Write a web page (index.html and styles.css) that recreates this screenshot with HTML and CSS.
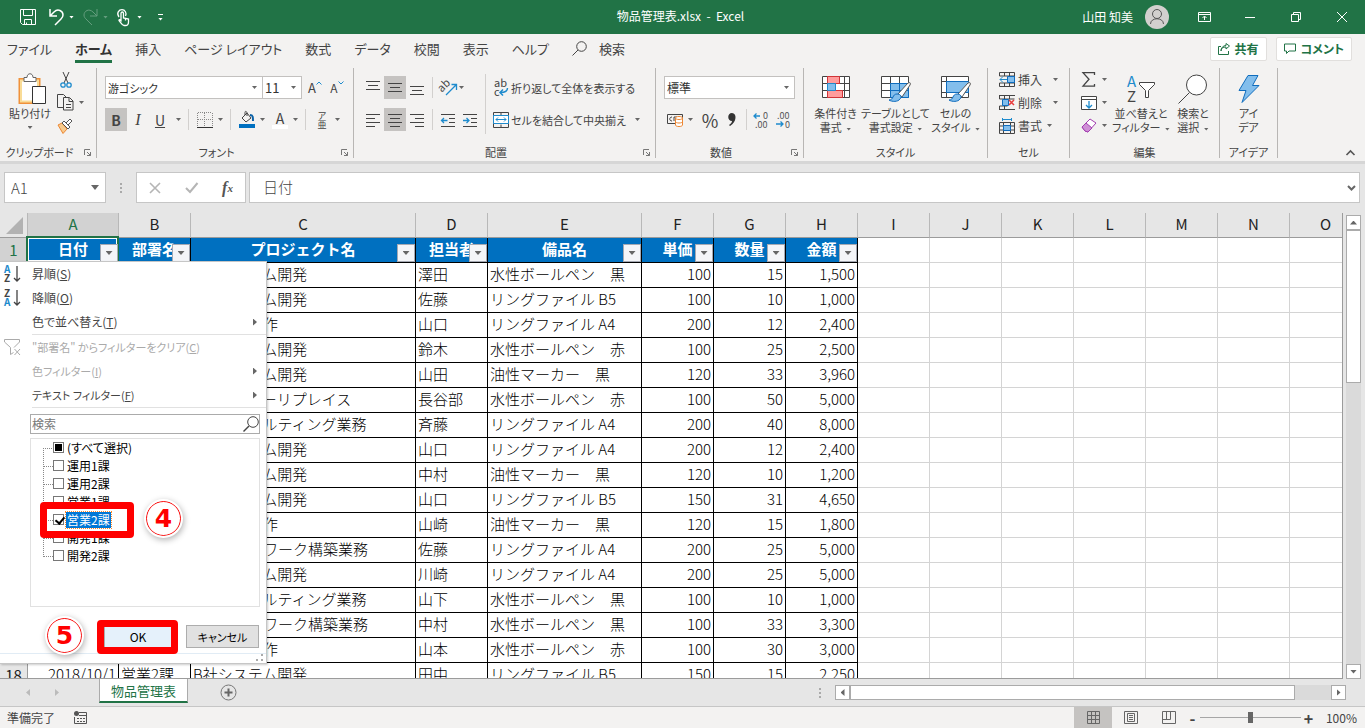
FILE: index.html
```html
<!DOCTYPE html>
<html lang="ja">

<head>
  <title>物品管理表.xlsx - Excel</title>
  <meta charset="utf-8">
  <meta name="viewport" content="width=device-width, initial-scale=1">
  <link rel="stylesheet" href="styles.css">
</head>

<body>

  <!-- Title bar -->
  <header class="titlebar">
    <div class="quick">
      <button aria-label="保存"><svg width="16" height="16" viewBox="0 0 16 16"><path d="M.5.5h15v15h-13l-2-2zM3.5.5v6h9v-6M4.5 15.500v-5h7v5M6.500 15.500v-2"/></svg></button>
      <button class="wide" aria-label="元に戻す"><svg width="15" height="18" viewBox="0 0 15 18"><path d="M1 1v7h7M1 8l4-4c4-4 9-1 9 3 0 2-1 3-2 4l-6 6" stroke-width="1.500"/></svg><i class="caret"></i></button>
      <button class="wide faded" aria-label="やり直し"><svg width="15" height="18" viewBox="0 0 15 18"><path d="M14 1v7H7M14 8l-4-4C6 0 1 3 1 7c0 2 1 3 2 4l6 6"/></svg><i class="caret"></i></button>
      <button class="wide touch" aria-label="タッチ"><svg width="13" height="17" viewBox="0 0 13 17"><path d="M2 8C-1 4 2 .7 5 .7S10 4 8.500 7M4 11V4.500c0-2 2.500-2 2.500 0V9l5 1v3c0 2-1 3.500-3 3.500H7c-2 0-3-3-5-5 0-1 1-1 2 0zM8.500 9.500v2" stroke-width="1.300"/></svg><i class="caret"></i></button>
      <button aria-label="カスタマイズ"><span class="more"></span></button>
    </div>
    <h1>物品管理表.xlsx&nbsp; -&nbsp; Excel</h1>
    <div class="account">
      <span>山田 知美</span>
      <svg class="avatar" width="24" height="24" viewBox="0 0 24 24"><circle cx="12" cy="12" r="12" fill="#d2d0ce" stroke="none"/><circle cx="12" cy="9" r="4.500"/><path d="M5.500 19c0-7 13-7 13 0"/></svg>
    </div>
    <div class="window-buttons">
      <button aria-label="リボンの表示"><svg width="13" height="10" viewBox="0 0 13 10"><path d="M.5.5h12v9H.5zM.5 2.500h12M6.500 8V4.500M4.500 6l2-2 2 2"/></svg></button>
      <button aria-label="最小化"><svg width="10" height="10" viewBox="0 0 10 10"><path d="M0 5.500h10"/></svg></button>
      <button aria-label="元のサイズ"><svg width="10" height="10" viewBox="0 0 10 10"><path d="M.5 2.500h7v7h-7zM2.500 2.500v-2h7v7h-2"/></svg></button>
      <button aria-label="閉じる"><svg width="10" height="10" viewBox="0 0 10 10"><path d="M0 0l10 10M10 0L0 10"/></svg></button>
    </div>
  </header>

  <!-- Ribbon tabs -->
  <nav class="tabs">
    <a href="#">ファイル</a>
    <a href="#" class="active">ホーム</a>
    <a href="#">挿入</a>
    <a href="#">ページ レイアウト</a>
    <a href="#">数式</a>
    <a href="#">データ</a>
    <a href="#">校閲</a>
    <a href="#">表示</a>
    <a href="#">ヘルプ</a>
    <a href="#" class="find"><svg width="15" height="15" viewBox="0 0 15 15"><circle cx="9.500" cy="5.500" r="4.800"/><path d="M6 9l-5.500 5.500"/></svg>検索</a>
    <div class="tab-actions">
      <button><svg width="12" height="12" viewBox="0 0 12 12"><path d="M3 3.500H.5v8h10V8M3 8c0-3 2-4 5-4V6l3.500-3L8 .5V2.500C5 2.500 3 5 3 8z"/></svg>共有</button>
      <button><svg width="12" height="12" viewBox="0 0 12 12"><path d="M.5 1h11v7H5L2.500 10.500V8h-2z"/></svg>コメント</button>
    </div>
  </nav>

  <!-- Ribbon -->
  <div class="ribbon">
    <section class="group clipboard">
      <div class="group-body">
        <button class="big"><svg width="28" height="32" viewBox="0 0 28 32"><path d="M1.500 6h20v24h-20z" fill="#fff" stroke="#f0913a" stroke-width="2"/><path d="M3 7.500h17v21H3z" stroke="#f9dc97" stroke-width="2"/><path d="M6 4.500h3c0-5 6-5 6 0h3v4H6z" fill="#fff" stroke="#666"/><path d="M14.500 13.500h13v17h-13z" fill="#fff" stroke="#333"/></svg><span>貼り付け</span><i class="caret"></i></button>
        <div class="stack">
          <button aria-label="切り取り"><svg width="12" height="16" viewBox="0 0 12 16"><path d="M3 0l5 11M9 0L4 11" stroke="#444"/><circle cx="3" cy="13" r="2.200" stroke="#1e8bcd" stroke-width="1.300"/><circle cx="9" cy="13" r="2.200" stroke="#1e8bcd" stroke-width="1.300"/></svg></button>
          <button aria-label="コピー"><svg width="17" height="17" viewBox="0 0 17 17"><path d="M6 13.500H.5V.5h6l3 3M6.500 3.500h6l3.500 3.500v9H6.500zM12 4v3.500h4M9 10.500h5M9 13.500h5"/></svg><i class="caret"></i></button>
          <button aria-label="書式のコピー"><svg width="16" height="16" viewBox="0 0 16 16"><path d="M1 7l4-2 5 6-4 4.500z" fill="#f8cb8d" stroke="#ed8733"/><path d="M5 5l2-2 6 6-2 2zM9 5l4-4 2 2-4 4" fill="#fff" stroke="#555"/></svg></button>
        </div>
      </div>
      <div class="group-title"><span>クリップボード</span><button class="launcher" aria-label="詳細"><svg width="7" height="7" viewBox="0 0 7 7"><path d="M.5 6V.5H6M3 3l3.500 3.500M6.500 3v3.500H3"/></svg></button></div>
    </section>

    <section class="group font">
      <div class="group-body rows">
        <div class="row">
          <div class="combo name"><input type="text" value="游ゴシック" aria-label="フォント"><i class="caret"></i></div><div class="combo size"><input type="text" value="11" aria-label="サイズ"><i class="caret"></i></div>
          <button class="grow" aria-label="拡大">A<svg width="6" height="4" viewBox="0 0 6 4"><path d="M.5 3.500L3 1l2.500 2.500" stroke="#1e8bcd"/></svg></button>
          <button class="grow small" aria-label="縮小">A<svg width="6" height="4" viewBox="0 0 6 4"><path d="M.5.5L3 3 5.500.5" stroke="#1e8bcd"/></svg></button>
        </div>
        <div class="row">
          <button class="tool on"><b>B</b></button>
          <button class="tool serif"><em>I</em></button>
          <button class="tool"><u>U</u></button><i class="caret"></i>
          <span class="rule"></span>
          <button class="tool slim" aria-label="罫線"><svg width="16" height="16" viewBox="0 0 16 16"><path d="M.5 1v13M7.500 1v13M15.500 1v13M1 .5h14M1 7.500h14" stroke="#888" stroke-dasharray="1 1"/><path d="M0 15.500h16" stroke="#333"/></svg></button><i class="caret"></i>
          <span class="rule"></span>
          <button class="tool slim" aria-label="塗りつぶしの色"><svg width="16" height="17" viewBox="0 0 16 17"><path d="M3 7l5-5 4 5-5 4zM6 4V1.500c0-2 2-1 2 .5v3" stroke="#444"/><path d="M11 4c3 0 3 2 3 6" stroke="#0b62a8" stroke-width="2"/><path d="M0 13h16v4H0z" fill="#0070c0" stroke="none"/></svg></button><i class="caret"></i>
          <button class="tool slim font-color"><span>A</span></button><i class="caret"></i>
          <span class="rule"></span>
          <button class="tool slim ruby"><span>ア</span><span>亜</span></button><i class="caret"></i>
        </div>
      </div>
      <div class="group-title"><span>フォント</span><button class="launcher" aria-label="詳細"><svg width="7" height="7" viewBox="0 0 7 7"><path d="M.5 6V.5H6M3 3l3.500 3.500M6.500 3v3.500H3"/></svg></button></div>
    </section>

    <section class="group align">
      <div class="group-body">
        <div class="rows">
          <div class="row">
            <button class="tool" aria-label="上揃え"><svg width="14" height="16" viewBox="0 0 14 16"><path d="M0 1.500h14M2 5.500h10M0 9.500h14"/></svg></button>
            <button class="tool on" aria-label="上下中央揃え"><svg width="14" height="16" viewBox="0 0 14 16"><path d="M0 3.500h14M2 7.500h10M0 11.500h14"/></svg></button>
            <button class="tool" aria-label="下揃え"><svg width="14" height="16" viewBox="0 0 14 16"><path d="M0 6.500h14M2 10.500h10M0 14.500h14"/></svg></button>
            <span class="rule"></span>
            <button class="tool" aria-label="方向"><svg width="17" height="17" viewBox="0 0 17 17"><text x="-1" y="9" transform="rotate(-45 6 8)" font-size="11" fill="#444" stroke="none">ab</text><path d="M6 16L16 6M11.500 5.500h5V11" stroke="#1e8bcd" stroke-width="1.300"/></svg></button><i class="caret"></i>
          </div>
          <div class="row">
            <button class="tool" aria-label="左揃え"><svg width="14" height="14" viewBox="0 0 14 14"><path d="M0 1.500h14M0 5.500h9M0 9.500h14M0 13.500h9"/></svg></button>
            <button class="tool on" aria-label="中央揃え"><svg width="14" height="14" viewBox="0 0 14 14"><path d="M0 1.500h14M2 5.500h10M0 9.500h14M2 13.500h10"/></svg></button>
            <button class="tool" aria-label="右揃え"><svg width="14" height="14" viewBox="0 0 14 14"><path d="M0 1.500h14M5 5.500h9M0 9.500h14M5 13.500h9"/></svg></button>
            <span class="rule"></span>
            <button class="tool" aria-label="インデントを減らす"><svg width="14" height="14" viewBox="0 0 14 14"><path d="M0 1.500h14M8 5.500h6M8 9.500h6M0 13.500h14"/><path d="M6.500 7.500h-6M3 5L.5 7.500 3 10" stroke="#1e8bcd" stroke-width="1.300"/></svg></button>
            <button class="tool" aria-label="インデントを増やす"><svg width="14" height="14" viewBox="0 0 14 14"><path d="M0 1.500h14M8 5.500h6M8 9.500h6M0 13.500h14"/><path d="M0 7.500h6M3.500 5L6 7.500 3.500 10" stroke="#1e8bcd" stroke-width="1.300"/></svg></button>
          </div>
        </div>
        <span class="rule tall"></span>
        <div class="rows text-rows">
          <button class="label"><svg width="16" height="18" viewBox="0 0 16 18"><text x="1" y="8" font-size="11" fill="#444" stroke="none">ab</text><text x="1" y="17" font-size="11" fill="#444" stroke="none">c</text><path d="M14.500 9c0 4-3 4.500-7 4.500M10 10.500l-3 3 3 3" stroke="#1e8bcd" stroke-width="1.500"/></svg><span>折り返して全体を表示する</span></button>
          <button class="label"><svg width="16" height="16" viewBox="0 0 16 16"><path d="M.5.5h15v15H.5zM8 .5v3M8 12.500v3"/><path d="M.5 3.500h15v8H.5z" fill="#fff" stroke="#1e8bcd"/><path d="M3 7.500h10M5 5.500l-2 2 2 2M11 5.500l2 2-2 2" stroke="#1e8bcd"/></svg><span>セルを結合して中央揃え</span><i class="caret"></i></button>
        </div>
      </div>
      <div class="group-title"><span>配置</span><button class="launcher" aria-label="詳細"><svg width="7" height="7" viewBox="0 0 7 7"><path d="M.5 6V.5H6M3 3l3.500 3.500M6.500 3v3.500H3"/></svg></button></div>
    </section>

    <section class="group number">
      <div class="group-body rows">
        <div class="row"><div class="combo format"><select aria-label="表示形式"><option>標準</option></select><i class="caret"></i></div></div>
        <div class="row">
          <button class="tool" aria-label="通貨"><svg width="17" height="14" viewBox="0 0 17 14"><path d="M.5 1.500h15v9H.5z"/><path d="M5 4c-3 0-3 4 0 4M7 8V4h3v4" stroke="#444"/><path d="M8.500 5v7c0 2 7 2 7 0V5c0-2-7-2-7 0z" fill="#fff" stroke="#ed8733"/><path d="M8.500 5c0 2 7 2 7 0M8.500 8.500c0 2 7 2 7 0" stroke="#ed8733"/></svg></button><i class="caret"></i>
          <button class="tool percent">%</button>
          <button class="tool" aria-label="桁区切り"><svg width="8" height="14" viewBox="0 0 8 14"><path d="M4 0c5 0 5 9-2 13l-1-1c2-1 3-3 3-4C-1 8-1 0 4 0z" fill="#333" stroke="none"/></svg></button>
          <span class="rule"></span>
          <button class="tool" aria-label="小数点以下の表示桁数を増やす"><svg width="16" height="16" viewBox="0 0 16 16"><path d="M7 4H1M3.500 1.500L1 4l2.500 2.500" stroke="#1e8bcd" stroke-width="1.300"/><text x="10" y="7" font-size="9" fill="#555" stroke="none">0</text><text x="2" y="16" font-size="9" fill="#555" stroke="none">.00</text></svg></button>
          <button class="tool" aria-label="小数点以下の表示桁数を減らす"><svg width="16" height="16" viewBox="0 0 16 16"><path d="M1 12h7M5.500 9.500L8 12l-2.500 2.500" stroke="#1e8bcd" stroke-width="1.300"/><text x="2" y="7" font-size="9" fill="#555" stroke="none">.00</text><text x="10" y="16" font-size="9" fill="#555" stroke="none">0</text></svg></button>
        </div>
      </div>
      <div class="group-title"><span>数値</span><button class="launcher" aria-label="詳細"><svg width="7" height="7" viewBox="0 0 7 7"><path d="M.5 6V.5H6M3 3l3.500 3.500M6.500 3v3.500H3"/></svg></button></div>
    </section>

    <section class="group styles">
      <div class="group-body">
        <button class="big"><svg width="30" height="28" viewBox="0 0 30 28"><path d="M1.500 1.500h27v21h-27zM1.500 8.500h27M1.500 15.500h27M6.500 1.500v21M23.500 1.500v21" fill="#fff"/><path d="M6.500 1.500h12v7h-12zM6.500 15.500h15v7h-15z" fill="#ff9c9c" stroke="#d13438"/><path d="M6.500 8.500h8v7h-8z" fill="#83beec" stroke="#1e8bcd"/></svg><span>条件付き</span><span>書式 <i class="caret"></i></span></button>
        <button class="big"><svg width="32" height="28" viewBox="0 0 32 28"><path d="M1.500 1.500h27v21h-27zM1.500 8.500h27M1.500 15.500h27M10.500 1.500v21M19.500 1.500v21" fill="#fff"/><path d="M10.500 8.500h18v14h-18zM10.500 15.500h18M19.500 8.500v14" fill="#83beec" stroke="#0f6cbd"/><path d="M18 19L28 8c2-1 3 0 2 2L22 22z" fill="#fff" stroke="#555"/><path d="M9 25c5 0 3-6 8-6 4 0 5 3 3 5-2 3-8 3-11 1z" fill="#83beec" stroke="#0f6cbd"/></svg><span>テーブルとして</span><span>書式設定 <i class="caret"></i></span></button>
        <button class="big"><svg width="32" height="28" viewBox="0 0 32 28"><path d="M1.500 1.500h27v21h-27zM1.500 6.500h27M1.500 17.500h27M6.500 1.500v21" fill="#fff"/><path d="M6.500 6.500h22v11h-22z" fill="#83beec" stroke="#0f6cbd"/><path d="M18 19L28 8c2-1 3 0 2 2L22 22z" fill="#fff" stroke="#555"/><path d="M9 25c5 0 3-6 8-6 4 0 5 3 3 5-2 3-8 3-11 1z" fill="#83beec" stroke="#0f6cbd"/></svg><span>セルの</span><span>スタイル <i class="caret"></i></span></button>
      </div>
      <div class="group-title"><span>スタイル</span></div>
    </section>

    <section class="group cells">
      <div class="group-body stack">
        <button class="label"><svg width="16" height="15" viewBox="0 0 16 15"><path d="M.5 4V.5h15v14H.5V11M.5 4h15M.5 11h15M5.500.5V4M10.500.5v14M5.500 11v3.500"/><path d="M8.500 4.500h7v6h-7z" fill="#83beec" stroke="#0f6cbd"/><path d="M8 7.500H1M4 4.500l-3 3 3 3" stroke="#1e8bcd"/></svg><span>挿入</span><i class="caret"></i></button>
        <button class="label"><svg width="16" height="15" viewBox="0 0 16 15"><path d="M0 .5h16M0 14.500h16M.5 4h15M.5 11h8M5.500.5V4M10.500.5V4M5.500 11v3.500M.5.5V4M.5 11v3.500"/><path d="M3.500 4.500h6v6h-6z" fill="#83beec" stroke="#0f6cbd"/><path d="M10 5l5 5M15 5l-5 5" stroke="#e83c3c" stroke-width="1.500"/></svg><span>削除</span><i class="caret"></i></button>
        <button class="label"><svg width="16" height="16" viewBox="0 0 16 16"><path d="M.5 4.500h15v11H.5zM.5 8h15M.5 12h15M4.500 4.500v11M11.500 4.500v11"/><path d="M4.500 7.500h7v5h-7z" fill="#83beec" stroke="#0f6cbd"/><path d="M3.500 1.500h9M3.500 0v3M12.500 0v3" stroke="#1e8bcd"/></svg><span>書式</span><i class="caret near"></i></button>
      </div>
      <div class="group-title"><span>セル</span></div>
    </section>

    <section class="group edit">
      <div class="group-body">
        <div class="stack">
          <button class="label" aria-label="合計"><svg width="16" height="15" viewBox="0 0 16 15"><path d="M13.500 3V.7H2l6 6.500-6 7h11.500V12" stroke-width="1.300"/></svg><i class="caret"></i></button>
          <button class="label" aria-label="フィル"><svg width="16" height="14" viewBox="0 0 16 14"><path d="M.5.5h15v13H.5zM.5 3.500h15" fill="#fff"/><path d="M8 5v7M5 9l3 3 3-3" stroke="#1e8bcd" stroke-width="1.300"/></svg><i class="caret"></i></button>
          <button class="label" aria-label="クリア"><svg width="16" height="15" viewBox="0 0 16 15"><path d="M1 9l8-8 6 4-8 9-3-1z" fill="#fff" stroke="#a33fb0"/><path d="M1 9l4-4 6 5-4 4-3-1z" fill="#cf8fd6" stroke="#a33fb0"/></svg><i class="caret"></i></button>
        </div>
        <button class="big sort"><svg width="30" height="28" viewBox="0 0 30 28"><text x="1" y="12" font-size="15" fill="#1e8bcd" stroke="none">A</text><text x="1" y="27" font-size="15" fill="#444" stroke="none">Z</text><path d="M13.500 7.500h15v2l-6 6v7h-3v-7l-6-6z" fill="#fff"/></svg><span>並べ替えと</span><span>フィルター <i class="caret"></i></span></button>
        <button class="big"><svg width="30" height="30" viewBox="0 0 30 30"><circle cx="18.500" cy="11" r="10" fill="#fff"/><path d="M11.500 18.500L.5 29.500"/></svg><span>検索と</span><span>選択 <i class="caret"></i></span></button>
      </div>
      <div class="group-title"><span>編集</span></div>
    </section>

    <section class="group ideas">
      <div class="group-body">
        <button class="big"><svg width="24" height="30" viewBox="0 0 24 30"><path d="M11 1.500h10l-5.500 10H22L5 28.500l4-12H2z" fill="#83beec" stroke="#0f6cbd"/></svg><span>アイ</span><span>デア</span></button>
      </div>
      <div class="group-title"><span>アイデア</span></div>
    </section>
    <button class="collapse" aria-label="リボンを折りたたむ"><svg width="9" height="6" viewBox="0 0 9 6"><path d="M.5 5l4-4 4 4" stroke="#555" stroke-width="1.600"/></svg></button>
  </div>

  <!-- Formula bar -->
  <div class="formula-bar">
    <div class="box name-box"><input type="text" value="A1" aria-label="名前ボックス"><i class="caret big-caret"></i></div>
    <span class="grip"></span>
    <div class="box fx">
      <button aria-label="キャンセル"><svg width="12" height="12" viewBox="0 0 12 12"><path d="M1 1l10 10M11 1L1 11" stroke="#b5b5b5" stroke-width="1.600"/></svg></button>
      <button aria-label="入力"><svg width="13" height="11" viewBox="0 0 13 11"><path d="M1 6l4 4 7.500-9" stroke="#b5b5b5" stroke-width="2"/></svg></button>
      <button class="fx-text"><em>f</em><small>x</small></button>
    </div>
    <div class="box formula"><input type="text" value="日付" aria-label="数式"><svg width="9" height="6" viewBox="0 0 9 6"><path d="M1 1l3.500 3.500L8 1" stroke="#666" stroke-width="2"/></svg></div>
  </div>

  <!-- Sheet -->
  <main class="sheet">
    <div class="grid">
      <table id="cells"></table>
    </div>
    <div class="vscroll">
      <button aria-label="上へ"><i class="arrow up"></i></button>
      <div class="thumb"></div>
      <button aria-label="下へ"><i class="arrow down"></i></button>
    </div>

    <!-- Filter menu -->
    <div class="filter-menu">
      <button class="item"><svg width="17" height="18" viewBox="0 0 17 18"><text x="0" y="8" font-size="10" font-weight="bold" fill="#1e8bcd" stroke="none">A</text><text x="0" y="17" font-size="10" font-weight="bold" fill="#444" stroke="none">Z</text><path d="M13 1v15M10 13l3 3 3-3" stroke-width="1.300"/></svg><span>昇順(<u>S</u>)</span></button>
      <button class="item"><svg width="17" height="18" viewBox="0 0 17 18"><text x="0" y="8" font-size="10" font-weight="bold" fill="#444" stroke="none">Z</text><text x="0" y="17" font-size="10" font-weight="bold" fill="#1e8bcd" stroke="none">A</text><path d="M13 1v15M10 13l3 3 3-3" stroke-width="1.300"/></svg><span>降順(<u>O</u>)</span></button>
      <button class="item sub"><span>色で並べ替え(<u>T</u>)</span><i class="arrow right"></i></button>
      <hr>
      <button class="item kana" disabled><svg width="17" height="17" viewBox="0 0 17 17"><path d="M15.500 3V.5H.5V3l6 5.500v7l3-2M15.500 3L10 8.500M10.500 10l5.500 6M16 10l-5.500 6" stroke="#aaa"/></svg><span>"部署名" からフィルターをクリア(<u>C</u>)</span></button>
      <button class="item kana sub" disabled><span>色フィルター(<u>I</u>)</span><i class="arrow right"></i></button>
      <button class="item kana sub"><span>テキスト フィルター(<u>F</u>)</span><i class="arrow right"></i></button>
      <hr>
      <div class="search"><input type="text" placeholder="検索" aria-label="検索"><svg width="16" height="16" viewBox="0 0 16 16"><circle cx="10" cy="6" r="5.300"/><path d="M6 10l-5.500 5.500" stroke-width="1.500"/></svg></div>
      <ul class="tree">
        <li><label><input type="checkbox" class="some"><span>(すべて選択)</span></label></li>
        <li><label><input type="checkbox"><span>運用1課</span></label></li>
        <li><label><input type="checkbox"><span>運用2課</span></label></li>
        <li><label><input type="checkbox"><span>営業1課</span></label></li>
        <li class="picked"><label><input type="checkbox" checked><span>営業2課</span></label><div class="mark"></div><div class="step">4</div></li>
        <li><label><input type="checkbox"><span>開発1課</span></label></li>
        <li><label><input type="checkbox"><span>開発2課</span></label></li>
      </ul>
      <div class="menu-buttons">
        <div class="ok"><button>OK</button><div class="mark"></div><div class="step">5</div></div>
        <button>キャンセル</button>
      </div>
      <div class="resize"><svg width="8" height="8" viewBox="0 0 8 8"><path d="M5 0h2v2H5zM5 5h2v2H5zM0 5h2v2H0z" fill="#aaa" stroke="none"/></svg></div>
    </div>
  </main>

  <!-- Sheet tabs -->
  <div class="sheet-tabs">
    <div class="sheet-nav"><i class="arrow left"></i><i class="arrow right"></i></div>
    <a href="#" class="sheet-tab">物品管理表</a>
    <button class="add" aria-label="新しいシート"><svg width="17" height="17" viewBox="0 0 17 17"><circle cx="8.500" cy="8.500" r="7.500" stroke="#777"/><path d="M4.500 8.500h8M8.500 4.500v8" stroke="#666" stroke-width="2"/></svg></button>
    <span class="grip"></span>
    <div class="hscroll">
      <button aria-label="左へ"><i class="arrow left"></i></button>
      <div class="thumb"></div>
      <button aria-label="右へ"><i class="arrow right"></i></button>
    </div>
  </div>

  <!-- Status bar -->
  <footer class="status">
    <span>準備完了</span>
    <svg width="13" height="13" viewBox="0 0 13 13"><path d="M5 1.500h7.500v11H.5V6M5 4.500h7.500M3 7.500h2M6 7.500h2M9 7.500h2M3 10.500h2M6 10.500h2M9 10.500h2" stroke="#555"/><circle cx="2.500" cy="2.500" r="2.500" fill="#555" stroke="none"/></svg>
    <div class="views">
      <button class="on" aria-label="標準"><svg width="13" height="13" viewBox="0 0 13 13"><path d="M.5.5h12v12H.5zM4.500.5v12M8.500.5v12M.5 4.500h12M.5 8.500h12" stroke="#666"/></svg></button>
      <button aria-label="ページ レイアウト"><svg width="14" height="13" viewBox="0 0 14 13"><path d="M.5.5h13v12H.5zM3.500 2.500h7v8h-7zM5 4.500h4M5 6.500h4M5 8.500h4" stroke="#666"/></svg></button>
      <button aria-label="改ページ"><svg width="14" height="13" viewBox="0 0 14 13"><path d="M.5.5h13v12H.5zM.5 8.500h8v-8M4.500.5v8" stroke="#666"/></svg></button>
    </div>
    <div class="zoom">
      <button aria-label="縮小">-</button>
      <input type="range" min="0" max="100" value="50" aria-label="ズーム">
      <button aria-label="拡大">+</button>
    </div>
    <span class="percent-text">100%</span>
  </footer>

  <script src="script.js"></script>
</body>

</html>
```
FILE: styles.css
```css
* {
  box-sizing: border-box;
  margin: 0;
  padding: 0;
}

body {
  display: flex;
  flex-direction: column;
  height: 100vh;
  overflow: hidden;
  background-color: #e6e6e6;
  color: #444;
  font-family: "Noto Sans CJK JP", sans-serif;
  font-size: 12px;
  line-height: 14px;
  font-feature-settings: "palt";
}

button,
input,
select {
  font: inherit;
  font-feature-settings: inherit;
  color: inherit;
  background: none;
  border: none;
  outline: none;
}

button {
  display: flex;
  align-items: center;
  justify-content: center;
  white-space: nowrap;
}

a {
  color: inherit;
  text-decoration: none;
}

svg {
  display: block;
  flex: none;
  fill: none;
  stroke: #444;
  overflow: visible;
}

/* Small triangles */
.caret {
  display: inline-block;
  flex: none;
  width: 5px;
  height: 3px;
  background-color: #666;
  clip-path: polygon(0 0, 100% 0, 50% 100%);
  vertical-align: middle;
}

.big-caret {
  width: 8px;
  height: 5px;
}

.arrow {
  display: block;
  flex: none;
  width: 7px;
  height: 4px;
  background-color: #666;
}

.arrow.up {
  clip-path: polygon(50% 0, 100% 100%, 0 100%);
}

.arrow.down {
  clip-path: polygon(0 0, 100% 0, 50% 100%);
}

.arrow.left,
.arrow.right {
  width: 4px;
  height: 7px;
}

.arrow.left {
  clip-path: polygon(100% 0, 100% 100%, 0 50%);
}

.arrow.right {
  clip-path: polygon(0 0, 100% 50%, 0 100%);
}

/* Title bar */
.titlebar {
  display: grid;
  grid-template-columns: 1fr auto 1fr auto;
  align-items: center;
  flex: none;
  height: 34px;
  background-color: #217346;
  color: white;
}

.titlebar svg {
  stroke: white;
}

.titlebar .caret {
  background-color: white;
}

.titlebar h1 {
  margin-left: 180px;
  padding-bottom: 2px;
  font-size: 12px;
  font-weight: normal;
}

.quick {
  display: flex;
  align-items: center;
  gap: 9px;
  padding-left: 20px;
}

.quick button {
  height: 20px;
}

.quick button:first-child {
  margin-right: 4px;
}

.quick .wide {
  gap: 5px;
}

.quick .touch {
  gap: 7px;
}

.faded {
  opacity: 0.3;
}

.more {
  position: relative;
  width: 5px;
  height: 7px;
  margin-left: 7px;
  border-top: 1px solid white;
}

.more::after {
  content: "";
  position: absolute;
  left: 0;
  bottom: 0;
  width: 5px;
  height: 3px;
  background-color: white;
  clip-path: polygon(0 0, 100% 0, 50% 100%);
}

.account {
  display: flex;
  align-items: center;
  justify-content: flex-end;
  gap: 12px;
  margin-right: 12px;
}

.titlebar .avatar {
  stroke: #555;
}

.window-buttons {
  display: flex;
}

.window-buttons button {
  width: 46px;
  height: 34px;
}

/* Ribbon tabs */
.tabs {
  display: flex;
  align-items: center;
  flex: none;
  gap: 23px;
  height: 30px;
  padding: 0 13px 0 7px;
  background-color: #f3f2f1;
  font-size: 13px;
  white-space: nowrap;
}

.tabs a {
  padding: 6px 0 4px;
  border-bottom: 3px solid transparent;
}

.tabs .active {
  color: #333;
  font-weight: bold;
  border-color: #217346;
}

.tabs .find {
  display: flex;
  align-items: center;
  gap: 12px;
}

.tab-actions {
  display: flex;
  gap: 9px;
  margin-left: auto;
}

.tab-actions button {
  gap: 5px;
  height: 24px;
  padding: 0 7px;
  background-color: white;
  border: 1px solid #e1dfdd;
  border-radius: 2px;
  color: #217346;
  font-size: 12px;
  font-weight: bold;
}

.tab-actions svg {
  stroke: #217346;
}

/* Ribbon */
.ribbon {
  display: flex;
  flex: none;
  height: 100px;
  padding-top: 4px;
  background-color: #f3f2f1;
  border-bottom: 3px solid #d6d6d6;
  font-size: 11px;
}

.group {
  display: flex;
  flex-direction: column;
  flex: none;
  height: 90px;
  border-right: 1px solid #b8b6b4;
}

.group-body {
  display: flex;
  flex: none;
  height: 76px;
}

.group-title {
  display: flex;
  align-items: center;
  flex: none;
  height: 16px;
  text-align: center;
  white-space: nowrap;
}

.group-title span {
  flex: 1;
}

.launcher {
  width: 17px;
  height: 14px;
}

.launcher svg {
  stroke: #777;
}

.clipboard { width: 97px; }
.font { width: 257px; }
.align { width: 302px; }
.number { width: 148px; }
.styles { width: 184px; }
.cells { width: 82px; }
.edit { width: 150px; }
.ideas { width: 58px; }

.big {
  flex-direction: column;
  justify-content: flex-start;
  padding-top: 4px;
}

.big svg {
  height: 34px;
}

.big .caret {
  margin-left: 2px;
}

.rows {
  display: flex;
  flex-direction: column;
  gap: 9px;
  padding-top: 8px;
}

.row {
  display: flex;
  align-items: center;
  flex: none;
  height: 23px;
}

.tool {
  flex: none;
  width: 22px;
  height: 23px;
  font-size: 14px;
}

.tool.slim {
  width: 16px;
}

.on {
  background-color: #c5c3c1;
}

.rule {
  flex: none;
  width: 1px;
  height: 21px;
  background-color: #d2d0ce;
}

.stack {
  display: flex;
  flex-direction: column;
}

.stack button {
  flex: none;
  height: 23px;
}

.clipboard .big {
  width: 48px;
  margin-left: 6px;
}

.clipboard .big svg {
  margin-left: 4px;
}

.clipboard .big .caret {
  margin: 6px 0 0;
}

.clipboard .stack {
  align-items: flex-start;
  margin-left: 3px;
}

.clipboard .stack button {
  gap: 5px;
}

.clipboard .stack button:first-child {
  padding-left: 3px;
}

.combo {
  display: flex;
  align-items: center;
  height: 23px;
  padding: 0 5px 0 2px;
  background-color: white;
  border: 1px solid #c3c1bf;
  font-size: 12px;
}

.combo input,
.combo select {
  flex: 1;
  min-width: 0;
  height: 20px;
  appearance: none;
  color: #333;
}

.combo.name {
  width: 158px;
  font-size: 11px;
}

.combo.size {
  width: 39px;
  border-left: none;
  font-size: 13px;
}

.combo.format {
  width: 131px;
}

.font .group-body,
.number .group-body {
  padding-left: 8px;
}

.grow {
  align-items: flex-start;
  width: 16px;
  margin-left: 5px;
  font-size: 13px;
}

.grow.small {
  margin-left: 6px;
  font-size: 12px;
}

.font .row:last-child .caret {
  margin: 0 7px 0 5px;
}

.font .row:last-child .rule {
  margin-right: 8px;
}

.serif {
  font-family: "Liberation Serif", serif;
  font-size: 16px;
}

.font-color span {
  width: 16px;
  border-bottom: 4px solid white;
}

.ruby {
  flex-direction: column;
  font-size: 9px;
  line-height: 9px;
}

.align .rows:first-child {
  padding-left: 8px;
}

.align .rows:first-child .rule {
  margin: 0 4px;
}

.rule.tall {
  height: 60px;
  margin: 6px 0 0 4px;
}

.label {
  justify-content: flex-start;
  height: 23px;
}

.label span {
  margin-left: 2px;
}

.text-rows {
  padding-left: 7px;
}

.text-rows .caret {
  margin-left: 9px;
}

.number .row .tool + .caret {
  margin: 0 6px 0 2px;
}

.number .rule {
  margin: 0 3px;
}

.percent {
  font-size: 18px;
}

.styles .group-body {
  justify-content: center;
}

.styles .big {
  width: 60px;
}

.cells .group-body {
  padding: 0 0 0 11px;
}

.cells .label span {
  margin-left: 3px;
  font-size: 12px;
}

.cells .caret {
  margin-left: 11px;
}

.cells .caret.near {
  margin-left: 5px;
}

.edit .stack {
  padding-left: 11px;
}

.edit .label .caret {
  margin-left: 5px;
}

.edit .big {
  width: 50px;
}

.edit .big.sort {
  width: 54px;
  margin-left: 7px;
}

.ideas .group-body {
  justify-content: center;
}

.collapse {
  align-self: flex-end;
  height: 16px;
  margin: 0 10px 0 auto;
}

/* Formula bar */
.formula-bar {
  display: flex;
  align-items: center;
  flex: none;
  height: 49px;
  padding: 0 5px 2px 4px;
}

.box {
  display: flex;
  align-items: center;
  height: 31px;
  padding: 0 6px;
  background-color: white;
  border: 1px solid #c6c6c6;
  font-size: 15px;
  font-weight: 300;
}

.box input {
  flex: 1;
  min-width: 0;
  height: 29px;
}

.name-box {
  width: 102px;
}

.grip {
  width: 2px;
  height: 10px;
  margin: 0 14px;
  background: repeating-linear-gradient(#aaa 0, #aaa 2px, transparent 2px, transparent 4px);
}

.fx {
  justify-content: space-around;
  width: 110px;
  margin-right: 3px;
  padding: 0;
}

.fx-text {
  color: #555;
  font-family: "Liberation Serif", serif;
  font-size: 16px;
  font-weight: bold;
}

.fx-text small {
  font-size: 11px;
  font-style: italic;
}

.formula {
  flex: 1;
  padding: 0 3px 0 13px;
}

.formula input {
  padding-bottom: 3px;
}

/* Sheet */
.sheet {
  display: flex;
  flex: 1;
  min-height: 0;
  position: relative;
}

.grid {
  flex: 1;
  overflow: hidden;
  border-right: 1px solid #9b9b9b;
  border-bottom: 1px solid #9b9b9b;
}

table {
  width: 1108px;
  table-layout: fixed;
  border-collapse: separate;
  border-spacing: 0;
  background-color: white;
  color: black;
  font-size: 15px;
  font-feature-settings: normal;
}

tr {
  height: 25px;
}

th,
td {
  height: 25px;
  padding: 0 2px 2px;
  border-right: 1px solid #d4d4d4;
  border-bottom: 1px solid #d4d4d4;
  font-weight: 300;
  line-height: 20px;
  white-space: nowrap;
  overflow: hidden;
}

thead th,
.row-head {
  background-color: #e6e6e6;
  border-color: #9b9b9b;
  color: #222;
  font-weight: normal;
}

thead th {
  border-right: 1px solid #b8b8b8;
}

.row-head {
  padding: 0;
  border-bottom-color: #c6c6c6;
}

th.current {
  background-color: #d2d2d2;
  color: #217346;
}

.corner {
  position: relative;
}

.corner::after {
  content: "";
  position: absolute;
  right: 4px;
  bottom: 3px;
  width: 17px;
  height: 17px;
  background-color: #b2b2b2;
  clip-path: polygon(100% 0, 100% 100%, 0 100%);
}

.data {
  border-color: black;
}

.num {
  text-align: right;
}

.title {
  position: relative;
  background-color: #0070c0;
  border-color: black;
  color: white;
  font-weight: bold;
}

.title button {
  position: absolute;
  right: 0;
  bottom: 0;
  width: 18px;
  height: 18px;
  background-color: #f4f5f8;
  border: 1px solid #a5a9b3;
}

.title.selected {
  overflow: visible;
  border-right-color: #217346;
}

.title.selected::before {
  content: "";
  position: absolute;
  inset: -2px -1px -1px -2px;
  border: 2px solid #217346;
  box-shadow: inset 0 0 0 1px white;
}

/* Scroll bars */
.vscroll {
  display: flex;
  flex-direction: column;
  width: 15px;
  margin: 2px 4px 0 3px;
  background-color: #dadada;
}

.vscroll button,
.hscroll button {
  flex: none;
  width: 15px;
  height: 15px;
  background-color: white;
  border: 1px solid #ababab;
}

.thumb {
  background-color: white;
  border: 1px solid #ababab;
}

.vscroll .thumb {
  height: 33%;
  margin-bottom: auto;
}

/* Filter menu */
.filter-menu {
  position: absolute;
  top: 48px;
  left: 0;
  width: 267px;
  background-color: white;
  border: 1px solid #c6c6c6;
  border-left: none;
  box-shadow: 1px 1px 2px rgba(0, 0, 0, 0.2);
}

.item {
  justify-content: flex-start;
  width: 100%;
  height: 24px;
  padding: 0 9px 0 4px;
}

.item.kana {
  font-size: 11px;
}

.item span {
  margin-left: 11px;
}

.item.sub span {
  margin-left: 28px;
}

.item .arrow {
  margin-left: auto;
}

.item:disabled {
  color: #aaa;
}

.filter-menu hr {
  height: 1px;
  margin-left: 32px;
  background-color: #e1e1e1;
  border: none;
}

.search {
  display: flex;
  align-items: center;
  width: 230px;
  height: 20px;
  margin: 6px 0 4px 30px;
  border: 1px solid #ababab;
}

.search input {
  flex: 1;
  min-width: 0;
  height: 18px;
  padding: 0 0 2px 1px;
}

.search input::placeholder {
  color: #777;
}

.tree {
  width: 230px;
  height: 169px;
  margin-left: 30px;
  border: 1px solid #e1e1e1;
  list-style: none;
  color: black;
}

.tree li {
  position: relative;
  height: 18px;
  margin-left: 12px;
  padding-left: 10px;
}

/* dotted lines of the tree */
.tree li::before {
  content: "";
  position: absolute;
  top: -9px;
  left: 0;
  width: 9px;
  height: 18px;
  border-left: 1px dotted #888;
  border-bottom: 1px dotted #888;
}

.tree li:first-child::before {
  top: 8px;
  height: 1px;
  border-left: none;
}

.tree label {
  display: flex;
  align-items: center;
  height: 17px;
}

.tree input {
  flex: none;
  width: 11px;
  height: 11px;
  appearance: none;
  background-color: white;
  border: 1px solid #777;
  position: relative;
}

.tree label span {
  margin-left: 2px;
  padding: 1px;
}

.some::after {
  content: "";
  position: absolute;
  inset: 1px;
  background-color: black;
}

.tree input:checked::after {
  content: "";
  position: absolute;
  top: 0;
  left: 3px;
  width: 4px;
  height: 7px;
  border: solid black;
  border-width: 0 2px 2px 0;
  transform: rotate(40deg);
}

.picked label span {
  background-color: #0078d7;
  outline: 1px dotted #ff8728;
  color: white;
}

.mark {
  position: absolute;
  border: 7px solid red;
  border-radius: 4px;
  z-index: 1;
}

.picked .mark {
  top: -9px;
  left: -3px;
  width: 94px;
  height: 36px;
}

.step {
  position: absolute;
  display: flex;
  align-items: center;
  justify-content: center;
  width: 35px;
  height: 35px;
  background-color: white;
  border: 1px solid red;
  border-radius: 50%;
  outline: 2px solid white;
  box-shadow: 1px 2px 6px 2px rgba(0, 0, 0, 0.3);
  color: red;
  font-family: "DejaVu Sans", sans-serif;
  font-size: 25px;
  font-weight: bold;
  z-index: 1;
}

.picked .step {
  top: -10px;
  left: 103px;
}

.menu-buttons {
  display: flex;
  gap: 14px;
  margin: 18px 7px 5px 104px;
}

.menu-buttons button {
  width: 73px;
  height: 23px;
  background-color: #e1e1e1;
  border: 1px solid #adadad;
  color: black;
  font-size: 11px;
}

.ok {
  position: relative;
}

.menu-buttons .ok button {
  width: 68px;
  background-color: #e5f1fb;
  font-size: 12px;
}

.ok .mark {
  inset: -5px -6px -6px -7px;
}

.ok .step {
  top: -7px;
  left: -57px;
}

.resize {
  display: flex;
  align-items: flex-end;
  justify-content: flex-end;
  height: 10px;
  padding: 0 2px 1px;
  border-top: 1px solid #e1ecf5;
}

/* Sheet tabs */
.sheet-tabs {
  display: flex;
  align-items: center;
  flex: none;
  height: 28px;
  border-bottom: 1px solid #c6c6c6;
}

.sheet-nav {
  display: flex;
  gap: 25px;
  width: 99px;
  padding-left: 26px;
}

.sheet-nav .arrow {
  background-color: #bbb;
}

.sheet-tab {
  align-self: flex-start;
  height: 24px;
  padding: 5px 11px 0;
  background-color: white;
  border: solid #ababab;
  border-width: 0 1px;
  border-bottom: 2px solid #217346;
  color: #217346;
  font-size: 13px;
}

.add {
  margin-left: 32px;
}

.sheet-tabs .grip {
  margin-left: auto;
}

.hscroll {
  display: flex;
  width: 38%;
  max-width: 511px;
  margin-right: 19px;
  background-color: #dadada;
}

.hscroll .thumb {
  flex: 0 0 87%;
  margin-right: auto;
}

/* Status bar */
.status {
  display: flex;
  align-items: center;
  flex: none;
  height: 21px;
  padding: 0 8px 0 7px;
  background-color: #f3f2f1;
}

.status > svg {
  margin-left: 19px;
}

.views {
  display: flex;
  margin-left: auto;
}

.views button {
  width: 38px;
  height: 21px;
}

.zoom {
  display: flex;
  align-items: center;
  gap: 3px;
}

.zoom button {
  width: 9px;
  font-size: 16px;
  font-weight: bold;
}

.zoom input {
  width: 101px;
  height: 13px;
  appearance: none;
  background: linear-gradient(#a6a6a6, #a6a6a6) center / 100% 1px no-repeat;
}

.zoom input::-webkit-slider-thumb {
  appearance: none;
  width: 5px;
  height: 11px;
  background-color: #666;
}

.percent-text {
  width: 33px;
  margin-left: 11px;
  text-align: right;
}
```
FILE: script.js
```
var widths = [28, 91, 72, 225, 72, 154, 72, 72, 72];
var letters = "ABCDEFGHIJKLMNO".split("");
var titles = ["日付", "部署名", "プロジェクト名", "担当者", "備品名", "単価", "数量", "金額"];

var system = "B社システム開発";
var web = "D社Web制作";
var server = "A社サーバーリプレイス";
var consult = "C社コンサルティング業務";
var network = "D社ネットワーク構築業務";
var black = "水性ボールペン　黒";
var red = "水性ボールペン　赤";
var marker = "油性マーカー　黒";

// project, person, item, price, count, total
var rows = [
  [system, "澤田", black, "100", "15", "1,500"],
  [system, "佐藤", "リングファイル B5", "100", "10", "1,000"],
  [web, "山口", "リングファイル A4", "200", "12", "2,400"],
  [system, "鈴木", red, "100", "25", "2,500"],
  [system, "山田", marker, "120", "33", "3,960"],
  [server, "長谷部", red, "100", "50", "5,000"],
  [consult, "斉藤", "リングファイル A4", "200", "40", "8,000"],
  [system, "山口", "リングファイル A4", "200", "12", "2,400"],
  [system, "中村", marker, "120", "10", "1,200"],
  [system, "山口", "リングファイル B5", "150", "31", "4,650"],
  [web, "山崎", marker, "120", "15", "1,800"],
  [network, "佐藤", "リングファイル A4", "200", "25", "5,000"],
  [system, "川崎", "リングファイル A4", "200", "25", "5,000"],
  [consult, "山下", black, "100", "10", "1,000"],
  [network, "中村", black, "100", "33", "3,300"],
  [web, "山本", red, "100", "30", "3,000"],
  [system, "田中", "リングファイル B5", "150", "15", "2,250"]
];

var html = "<colgroup>";
for (var i = 0; i <= letters.length; i++) {
  html += '<col style="width: ' + (widths[i] || 72) + 'px">';
}
html += '</colgroup><thead><tr><th class="corner"></th>';
letters.forEach(function (letter, i) {
  html += "<th" + (i === 0 ? ' class="current"' : "") + ">" + letter + "</th>";
});
html += '</tr></thead><tbody><tr><th class="row-head current">1</th>';

titles.forEach(function (title, i) {
  html += '<th class="title' + (i === 0 ? " selected" : "") + '">' + title +
    '<button aria-label="フィルター"><i class="arrow down"></i></button></th>';
});
html += "<td></td>".repeat(letters.length - titles.length) + "</tr>";

rows.forEach(function (row, r) {
  html += '<tr><th class="row-head">' + (r + 2) + "</th>";
  html += '<td class="data num">2018/10/1</td><td class="data">営業2課</td>';
  row.forEach(function (value, i) {
    html += '<td class="data' + (i > 2 ? " num" : "") + '">' + value + "</td>";
  });
  html += "<td></td>".repeat(letters.length - titles.length) + "</tr>";
});

document.getElementById("cells").innerHTML = html + "</tbody>";
```
